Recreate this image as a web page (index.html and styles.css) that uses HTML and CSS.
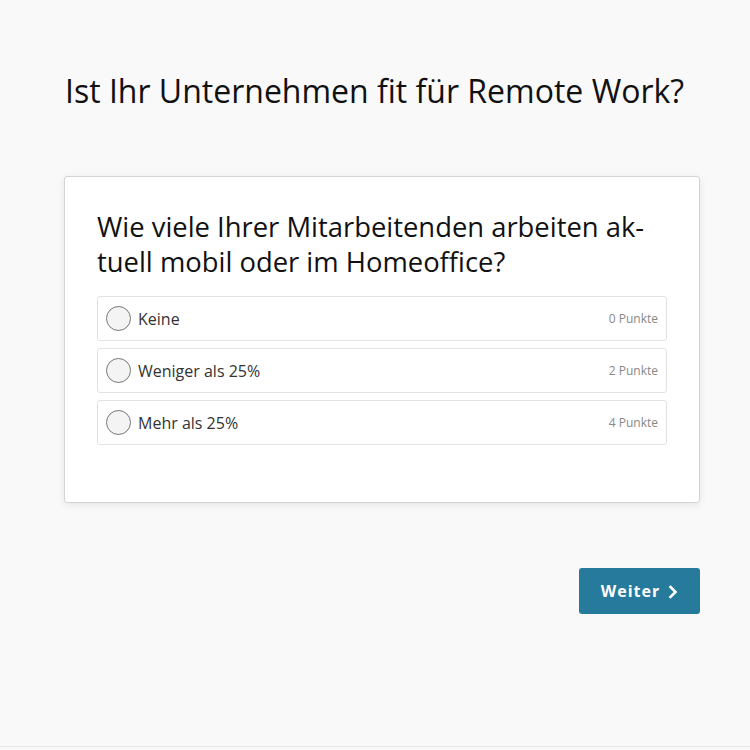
FILE: index.html
```html
<!DOCTYPE html>
<html lang="de">
<head>
<meta charset="utf-8">
<link rel="stylesheet" href="styles.css">
</head>
<body>
<div class="page">
  <main class="quiz">
    <h1 class="title">Ist Ihr Unternehmen fit für Remote Work?</h1>
    <section class="card">
      <h2 class="question">Wie viele Ihrer Mitarbeitenden arbeiten ak-<br>tuell mobil oder im Homeoffice?</h2>
      <div class="options">
        <label class="option"><span class="radio"></span><span class="label">Keine</span><span class="points">0 Punkte</span></label>
        <label class="option"><span class="radio"></span><span class="label">Weniger als 25%</span><span class="points">2 Punkte</span></label>
        <label class="option"><span class="radio"></span><span class="label">Mehr als 25%</span><span class="points">4 Punkte</span></label>
      </div>
    </section>
    <div class="actions">
      <button class="next">Weiter <svg class="chev" width="10" height="14" viewBox="0 0 10 14"><path d="M2.5 2 L7.5 7 L2.5 12" fill="none" stroke="#fff" stroke-width="2.6" stroke-linecap="square"/></svg></button>
    </div>
  </main>
</div>
</body>
</html>
```

FILE: styles.css
```css
html, body {
  margin: 0;
  padding: 0;
  background: #f9f9f9;
}
body {
  font-family: "Open Sans", sans-serif;
  color: #111;
}
.page {
  background: #f9f9f9;
  height: 746px;
  border-bottom: 1px solid #e6e6e6;
}
.quiz {
  width: 636px;
  margin-left: 64px;
  padding-top: 69px;
}
.title {
  margin: 0 0 0 1px;
  font-size: 32px;
  font-weight: 400;
  line-height: 44px;
  color: #111;
}
.card {
  margin-top: 63px;
  background: #fff;
  border: 1px solid #d4d4d4;
  border-radius: 3px;
  box-shadow: 0 2px 8px rgba(0,0,0,0.08);
  padding: 32px 32px 57px 32px;
}
.question {
  margin: 0 0 17px 0;
  font-size: 27.4px;
  font-weight: 400;
  line-height: 35px;
  color: #111;
}
.options {
  display: flex;
  flex-direction: column;
  gap: 7px;
}
.option {
  display: flex;
  align-items: center;
  height: 43px;
  border: 1px solid #e2e2e2;
  border-radius: 3px;
  padding: 0 8px;
}
.radio {
  width: 23px;
  height: 23px;
  border: 1px solid #777;
  border-radius: 50%;
  background: #f4f4f4;
  flex: none;
}
.label {
  margin-left: 7px;
  font-size: 16px;
  color: #333;
  flex: 1;
}
.points {
  font-size: 12px;
  color: #888;
}
.actions {
  display: flex;
  justify-content: flex-end;
  margin-top: 65px;
}
.next {
  display: flex;
  align-items: center;
  gap: 8px;
  width: 121px;
  height: 46px;
  justify-content: center;
  background: #267a9c;
  color: #fff;
  border: none;
  border-radius: 3px;
  font-family: "Open Sans", sans-serif;
  font-size: 16px;
  font-weight: 700;
  letter-spacing: 1px;
  padding: 0;
}
.chev {
  margin-top: 1px;
}
```
